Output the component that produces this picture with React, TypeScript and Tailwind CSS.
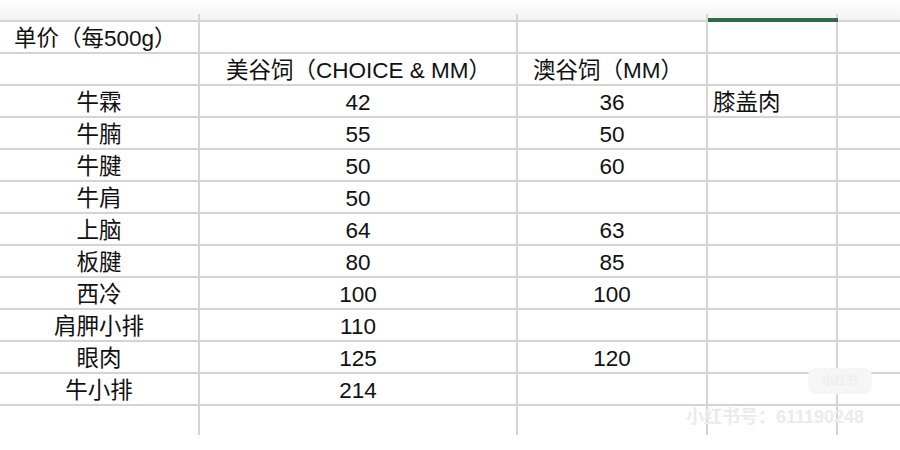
import React from "react";

const rows: [string, string, string, string][] = [
  ["牛霖", "42", "36", "膝盖肉"],
  ["牛腩", "55", "50", ""],
  ["牛腱", "50", "60", ""],
  ["牛肩", "50", "", ""],
  ["上脑", "64", "63", ""],
  ["板腱", "80", "85", ""],
  ["西冷", "100", "100", ""],
  ["肩胛小排", "110", "", ""],
  ["眼肉", "125", "120", ""],
  ["牛小排", "214", "", ""],
];

const line = "border-[#d4d4d4]";

export default function App() {
  return (
    <div
      className="relative w-[900px] h-[450px] overflow-hidden bg-white text-[#111] text-[22.5px]"
      style={{ fontFamily: '"Liberation Sans", "Noto Sans CJK SC", sans-serif' }}
    >
      {/* top strip */}
      <div className="flex h-[20px] bg-gradient-to-b from-white to-[#f3f3f3]">
        <div className="w-[200px] flex items-end">
          <div className={`w-full h-[6px] border-r-2 ${line}`} />
        </div>
        <div className="w-[318px] flex items-end">
          <div className={`w-full h-[6px] border-r-2 ${line}`} />
        </div>
        <div className="w-[190px] flex items-end">
          <div className={`w-full h-[6px] border-r-2 ${line}`} />
        </div>
        <div className="w-[130px] flex flex-col justify-end">
          <div className={`w-full h-[6px] border-r-2 ${line} flex flex-col justify-end`}>
            <div className="h-[4px] bg-[#2f6b48] -mr-[2px] mb-[-2px] relative" />
          </div>
        </div>
        <div className="flex-1" />
      </div>

      {/* grid */}
      <div className={`border-t-2 ${line}`}>
        {/* row 1 */}
        <div className={`flex h-[32px] border-b-2 ${line}`}>
          <div className={`w-[200px] border-r-2 ${line} flex items-center pt-[3px] pl-[14px] whitespace-nowrap`}>
            单价（每500g）
          </div>
          <div className={`w-[318px] border-r-2 ${line}`} />
          <div className={`w-[190px] border-r-2 ${line}`} />
          <div className={`w-[130px] border-r-2 ${line}`} />
          <div className="flex-1" />
        </div>
        {/* row 2 headers */}
        <div className={`flex h-[32px] border-b-2 ${line}`}>
          <div className={`w-[200px] border-r-2 ${line}`} />
          <div className={`w-[318px] border-r-2 ${line} flex items-center pt-[3px] pl-[26px] whitespace-nowrap`}>
            美谷饲（CHOICE &amp; MM）
          </div>
          <div className={`w-[190px] border-r-2 ${line} flex items-center pt-[3px] pl-[15px] whitespace-nowrap`}>
            澳谷饲（MM）
          </div>
          <div className={`w-[130px] border-r-2 ${line}`} />
          <div className="flex-1" />
        </div>
        {rows.map((r, i) => (
          <div key={i} className={`flex h-[32px] border-b-2 ${line}`}>
            <div className={`w-[200px] border-r-2 ${line} flex items-center justify-center pt-[3px] whitespace-nowrap`}>
              {r[0]}
            </div>
            <div className={`w-[318px] border-r-2 ${line} flex items-center justify-center pt-[3px]`}>
              {r[1]}
            </div>
            <div className={`w-[190px] border-r-2 ${line} flex items-center justify-center pt-[3px]`}>
              {r[2]}
            </div>
            <div className={`w-[130px] border-r-2 ${line} flex items-center pt-[3px] pl-[5px] whitespace-nowrap`}>
              {r[3]}
            </div>
            <div className="flex-1" />
          </div>
        ))}
        {/* partial row */}
        <div className="flex h-[29px]">
          <div className={`w-[200px] border-r-2 ${line}`} />
          <div className={`w-[318px] border-r-2 ${line}`} />
          <div className={`w-[190px] border-r-2 ${line}`} />
          <div className={`w-[130px] border-r-2 ${line}`} />
          <div className="flex-1" />
        </div>
      </div>

      {/* watermark */}
      <div className="absolute left-[808px] top-[368px] w-[64px] h-[26px] rounded-[8px] bg-[#f6f6f6] flex items-center justify-center text-[12px] font-bold text-[#efefef]">
        小红书
      </div>
      <div className="absolute left-[686px] top-[404px] text-[18px] font-bold text-[#ebebeb] whitespace-nowrap">
        小红书号：611190248
      </div>
    </div>
  );
}
